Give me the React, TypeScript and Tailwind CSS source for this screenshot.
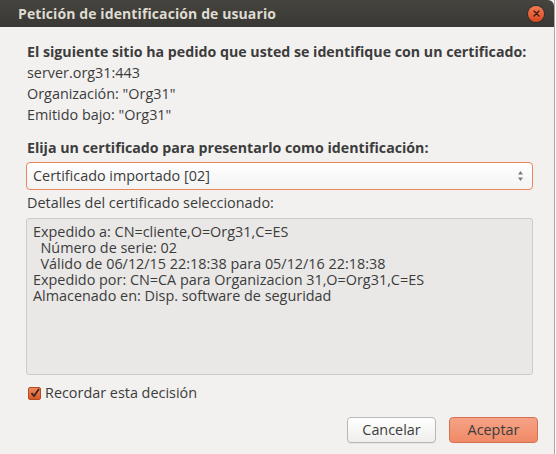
const font = { fontFamily: '"Open Sans", "DejaVu Sans", sans-serif' }

function CloseButton() {
  return (
    <div className="w-[16px] h-[16px] rounded-full bg-gradient-to-b from-[#f37a53] to-[#d9471c] flex items-center justify-center shadow-[0_0_0_1px_rgba(0,0,0,0.25)]">
      <svg width="7" height="7" viewBox="0 0 7 7">
        <path d="M1 1 L6 6 M6 1 L1 6" stroke="#3b1a0e" strokeWidth="1.3" strokeLinecap="round" />
      </svg>
    </div>
  )
}

function Arrows() {
  return (
    <svg width="7" height="12" viewBox="0 0 7 12">
      <path d="M3.5 1 L6 4.5 L1 4.5 Z" fill="#7a7a78" />
      <path d="M3.5 11 L6 7.5 L1 7.5 Z" fill="#7a7a78" />
    </svg>
  )
}

export default function App() {
  return (
    <div className="w-[556px] h-[454px] bg-white overflow-hidden" style={font}>
      <div className="w-[555px] h-[454px] bg-[#f2f1f0] border-r border-[#a9a7a2] flex flex-col text-[14.4px] text-[#3c3c3c]">
        <div className="h-[27px] shrink-0 rounded-tr-[6px] bg-gradient-to-b from-[#45443f] to-[#393834] flex items-center justify-between pl-[18px] pr-[10px]">
          <span className="text-[14px] font-bold text-[#dfdbd2] tracking-[0.1px]">Petición de identificación de usuario</span>
          <CloseButton />
        </div>

        <div className="flex flex-col pl-[26px] pr-[21px]">
          <div className="pt-[14px] pl-[1px] leading-[21px]">
            <p className="font-bold text-[14.2px] whitespace-nowrap">El siguiente sitio ha pedido que usted se identifique con un certificado:</p>
            <p>server.org31:443</p>
            <p>Organización: "Org31"</p>
            <p>Emitido bajo: "Org31"</p>
          </div>

          <p className="mt-[13px] pl-[1px] font-bold text-[14.2px] leading-[20px] whitespace-nowrap">Elija un certificado para presentarlo como identificación:</p>

          <div className="mt-[4px] h-[28px] rounded-[4px] border border-[#e9865c] bg-gradient-to-b from-white to-[#f4f3f2] flex items-center justify-between pl-[6px] pr-[8px]">
            <span>Certificado importado [02]</span>
            <Arrows />
          </div>

          <p className="mt-[3px] pl-[1px] leading-[20px]">Detalles del certificado seleccionado:</p>

          <div className="mt-[5px] h-[157px] rounded-[3px] border border-[#cdcbc7] bg-[#e9e8e7] pt-[5px] pl-[6px] leading-[16px] whitespace-pre">
            <p>Expedido a: CN=cliente,O=Org31,C=ES</p>
            <p>{'  '}Número de serie: 02</p>
            <p>{'  '}Válido de 06/12/15 22:18:38 para 05/12/16 22:18:38</p>
            <p>Expedido por: CN=CA para Organizacion 31,O=Org31,C=ES</p>
            <p>Almacenado en: Disp. software de seguridad</p>
          </div>

          <label className="mt-[10px] flex items-center gap-[4px] pl-[2px] leading-[16px]">
            <span className="w-[13px] h-[13px] rounded-[2px] bg-gradient-to-b from-[#f0885c] to-[#d9592a] border border-[#b34a22] flex items-center justify-center">
              <svg width="10" height="10" viewBox="0 0 10 10">
                <path d="M1.5 5 L4 8 L9 1" stroke="#3a2418" strokeWidth="1.8" fill="none" />
              </svg>
            </span>
            <span>Recordar esta decisión</span>
          </label>

          <div className="mt-[16px] flex justify-end gap-[13px] -mr-[5px]">
            <button className="w-[89px] h-[26px] rounded-[4px] border border-[#b9b7b3] bg-gradient-to-b from-white to-[#efeeed] shadow-[0_1px_0_rgba(0,0,0,0.05)]">Cancelar</button>
            <button className="w-[89px] h-[26px] rounded-[4px] border border-[#d4714f] bg-gradient-to-b from-[#f6a286] to-[#ef8a66]">Aceptar</button>
          </div>
        </div>
      </div>
    </div>
  )
}
